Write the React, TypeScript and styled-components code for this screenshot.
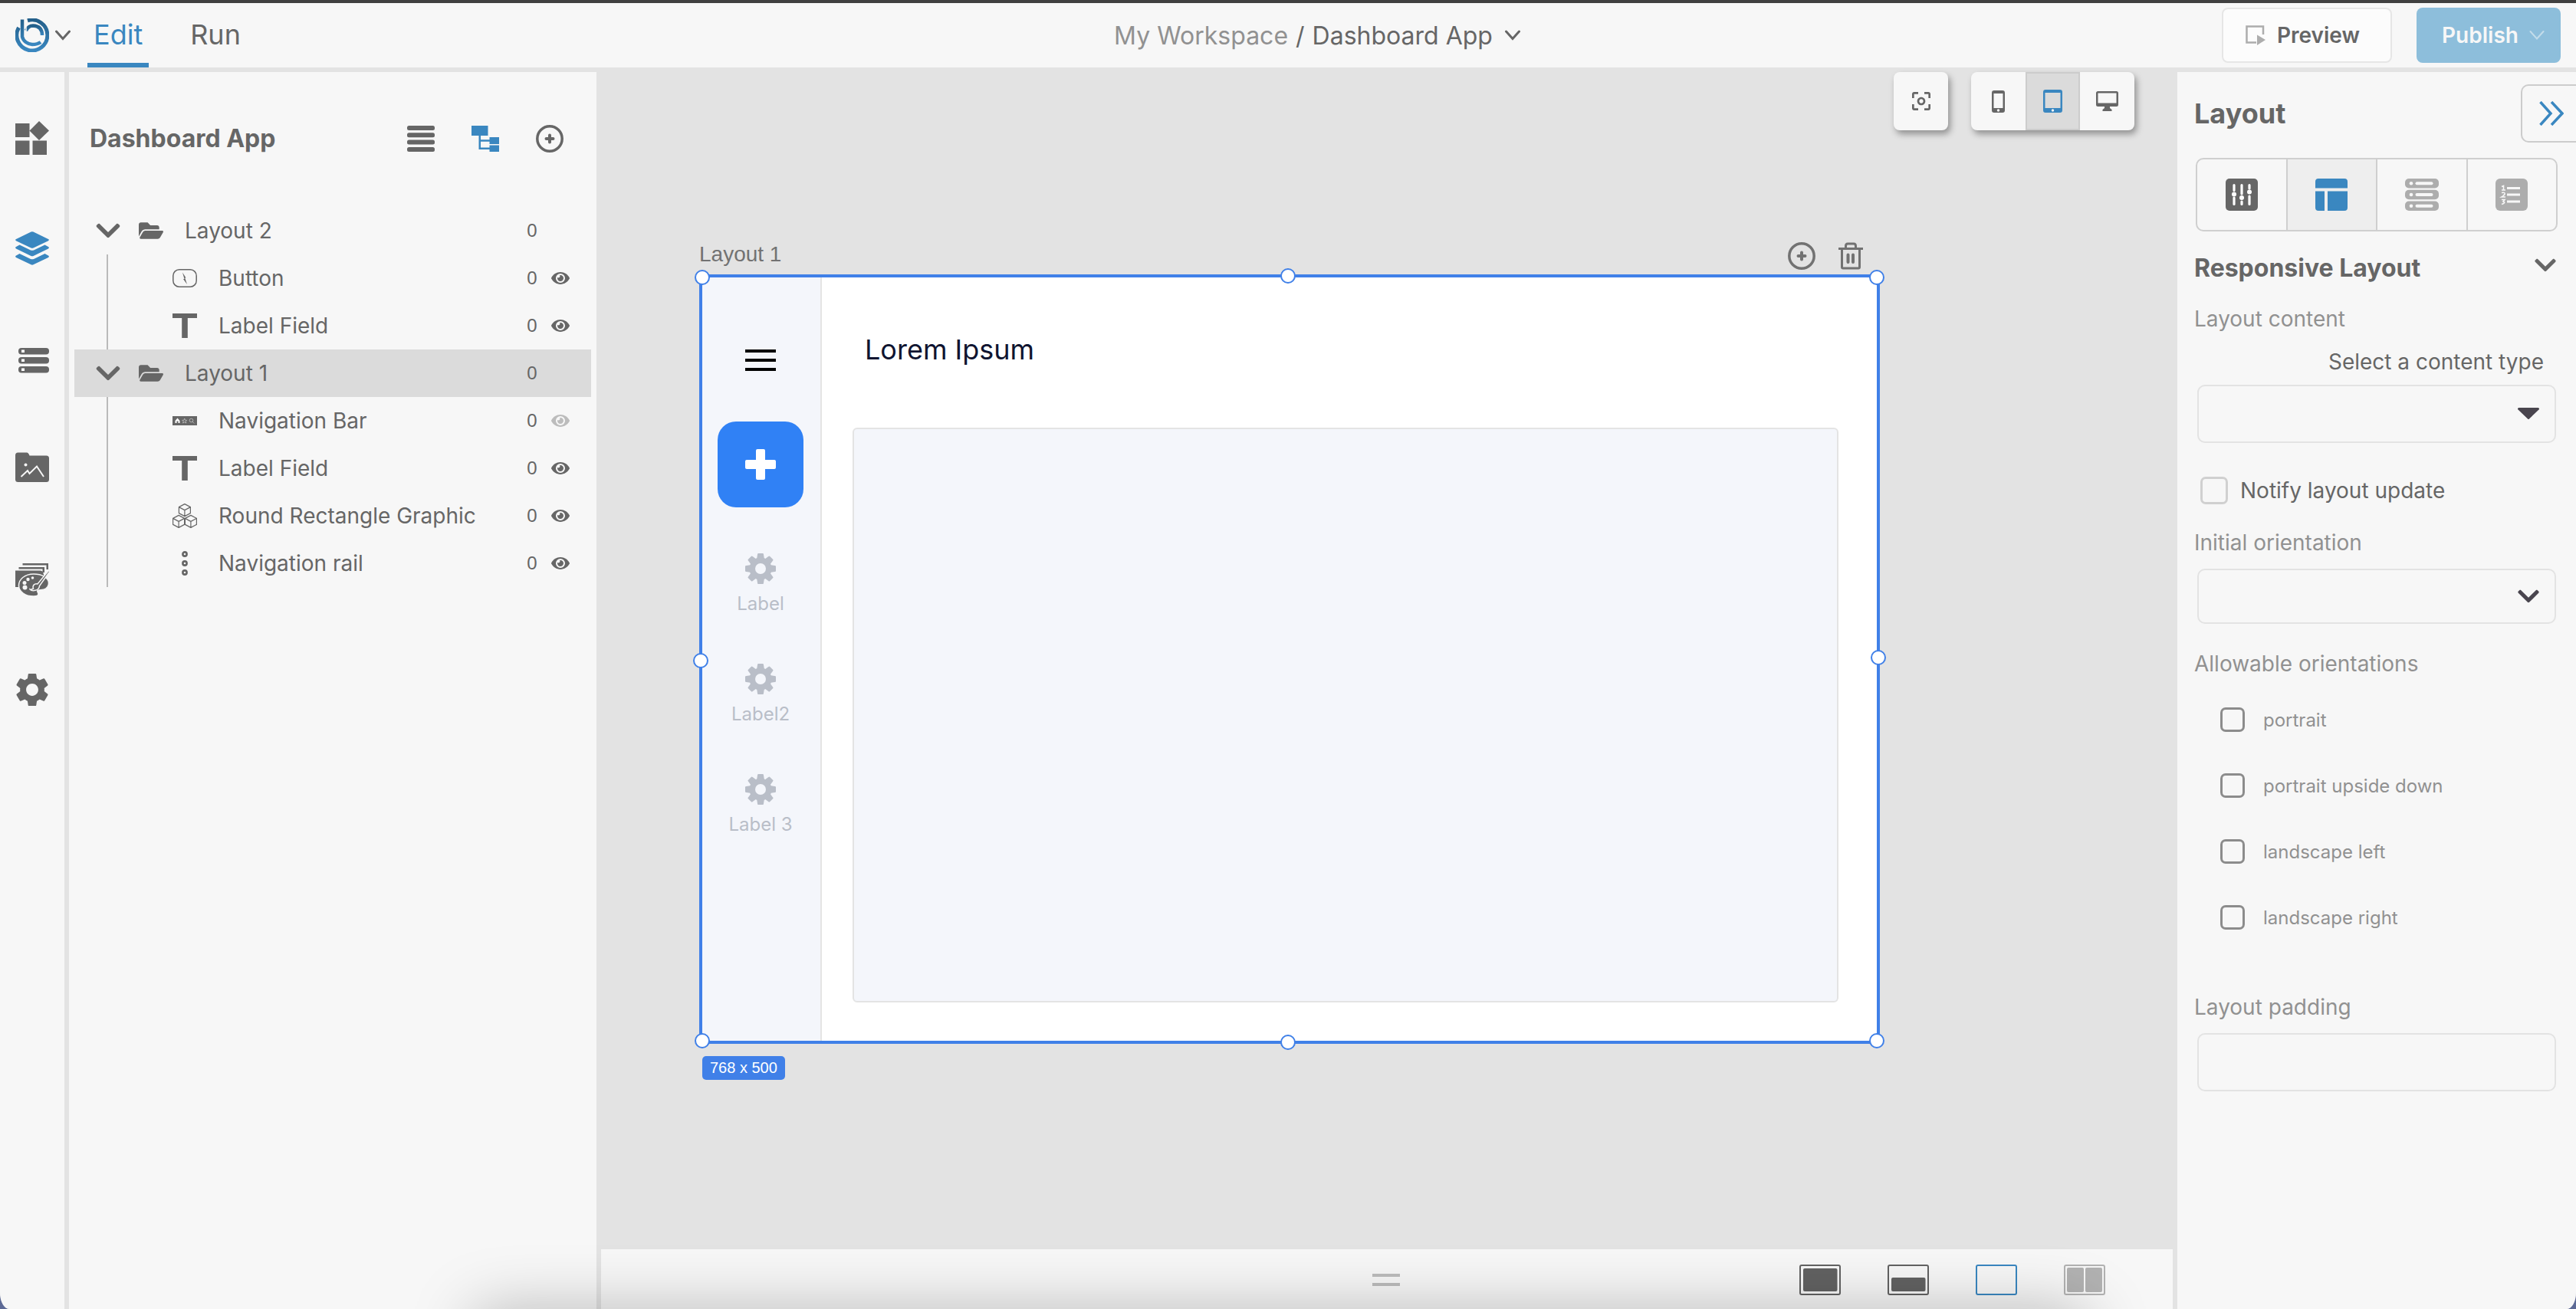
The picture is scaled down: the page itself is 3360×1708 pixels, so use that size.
import React from "react";
import styled, { createGlobalStyle, css } from "styled-components";
import { FaChevronDown, FaEye, FaFolderOpen } from "react-icons/fa";
import { MdCenterFocusWeak, MdSettings } from "react-icons/md";

const ink = "#666666";
const muted = "#919191";
const blue = "#3a87c0";
const selection = "#4080e8";
const surface = "#f7f7f7";
const gutter = "#e3e3e3";
const arial = `"Liberation Sans", Arial, sans-serif`;

const GlobalStyle = createGlobalStyle`
  * { box-sizing: border-box; }
  body { margin: 0; background: #5d6a96; }
  body, button, input, select {
    font-family: Inter, "Liberation Sans", Arial, sans-serif;
    color: ${ink};
  }
  button { padding: 0; border: 0; background: none; cursor: pointer; }
  h1, h2, h3, ul { margin: 0; padding: 0; list-style: none; }
  svg { display: block; flex: none; }
`;

/* ---------- page frame ---------- */

const Shell = styled.div`
  position: relative;
  display: flex;
  flex-direction: column;
  height: 100vh;
  overflow: hidden;
  background: ${gutter};
  border-top: 4px solid #404040;
  border-bottom-left-radius: 12px 22px;
  border-bottom-right-radius: 12px 22px;
`;

const DockShadow = styled.div`
  position: absolute;
  left: 620px;
  right: 640px;
  top: 100%;
  height: 80px;
  box-shadow: 0 4px 84px rgba(0, 0, 0, 0.28);
  pointer-events: none;
`;

const Header = styled.header`
  display: grid;
  grid-template-columns: 1fr auto 1fr;
  align-items: center;
  height: 84px;
  flex: none;
  padding: 0 20px;
  background: ${surface};
`;

const HeaderStart = styled.div`
  display: flex;
  align-items: center;
`;

const LogoButton = styled.button`
  display: flex;
  align-items: center;
  gap: 8px;
  margin-right: 22px;
`;

const ModeTabs = styled.nav`
  display: flex;
  gap: 46px;
`;

const ModeTab = styled.button<{ $active?: boolean }>`
  height: 84px;
  padding: 0 8px;
  font-size: 36px;
  border-top: 4px solid transparent;
  border-bottom: 6px solid ${(p) => (p.$active ? blue : "transparent")};
  color: ${(p) => (p.$active ? blue : ink)};
`;

const Breadcrumb = styled.div`
  display: flex;
  align-items: center;
  gap: 10px;
  padding-left: 76px;
  font-size: 32px;
`;

const WorkspaceLink = styled.a`
  color: ${muted};
  text-decoration: none;
`;

const AppSwitcher = styled.button`
  display: flex;
  align-items: center;
  gap: 16px;
  font-size: 32px;
`;

const HeaderEnd = styled.div`
  display: flex;
  justify-content: flex-end;
  gap: 32px;
`;

const ActionButton = styled.button<{ $primary?: boolean }>`
  display: flex;
  align-items: center;
  justify-content: center;
  gap: 14px;
  height: 72px;
  border-radius: 8px;
  font-size: 28px;
  font-weight: 600;
  ${(p) =>
    p.$primary
      ? css`
          width: 188px;
          padding-left: 12px;
          background: #8dbedb;
          color: #f7f7f7;
        `
      : css`
          width: 222px;
          padding-right: 12px;
          background: #fcfcfc;
          border: 2px solid #e6e6e6;
        `}
`;

const Workspace = styled.div`
  flex: 1;
  min-height: 0;
  display: grid;
  grid-template-columns: 84px 688px minmax(0, 1fr) 520px;
  gap: 6px;
  padding-top: 6px;
`;

/* ---------- icon rail ---------- */

const Rail = styled.nav`
  display: flex;
  flex-direction: column;
  align-items: center;
  gap: 100px;
  padding-top: 64px;
  background: ${surface};
`;

const RailButton = styled.button<{ $active?: boolean }>`
  width: 44px;
  height: 44px;
  color: ${(p) => (p.$active ? blue : ink)};
`;

/* ---------- layer tree ---------- */

const TreePanel = styled.aside`
  padding: 0 7px;
  background: ${surface};
`;

const TreeHeader = styled.div`
  display: flex;
  align-items: center;
  gap: 48px;
  height: 76px;
  margin: 49px 36px 51px 20px;
`;

const TreeTitle = styled.h1`
  flex: 1;
  font-size: 32px;
  line-height: 40px;
  font-weight: 700;
`;

const IconButton = styled.button<{ $color?: string }>`
  color: ${(p) => p.$color ?? ink};
`;

const Row = styled.div<{ $selected?: boolean }>`
  display: flex;
  align-items: center;
  height: 62px;
  font-size: 28px;
  padding-right: 28px;
  background: ${(p) => (p.$selected ? "#dbdbdb" : "transparent")};
`;

const GroupRow = styled(Row)`
  padding-left: 28px;
`;

const Children = styled.ul`
  margin-left: 42px;
  border-left: 2px solid #bababa;
`;

const ChildRow = styled(Row)`
  padding-left: 84px;
`;

const Disclosure = styled.button`
  margin-right: 24px;
  svg {
    width: 32px;
    height: 36px;
  }
`;

const RowIcon = styled.span`
  width: 32px;
  margin-right: 28px;
  svg {
    width: 32px;
    height: 32px;
  }
`;

const RowName = styled.span`
  flex: 1;
`;

const RowCount = styled.span`
  width: 16px;
  font-family: ${arial};
  font-size: 24px;
  text-align: center;
`;

const Visibility = styled.button<{ $dim?: boolean }>`
  width: 24px;
  height: 24px;
  margin-left: 17px;
  color: ${(p) => (p.$dim ? "#bcbcbc" : ink)};
  svg {
    width: 24px;
    height: 22px;
  }
`;

/* ---------- canvas ---------- */

const Stage = styled.main`
  display: flex;
  flex-direction: column;
  min-height: 0;
`;

const Canvas = styled.section`
  flex: 1;
  min-height: 0;
`;

const CanvasTools = styled.div`
  display: flex;
  justify-content: flex-end;
  gap: 30px;
  padding-right: 50px;
`;

const ToolGroup = styled.div`
  display: flex;
  height: 76px;
  border-radius: 8px;
  background: ${surface};
  box-shadow: 3px 5px 9px rgba(0, 0, 0, 0.36);
`;

const ToolButton = styled.button<{ $active?: boolean }>`
  display: grid;
  place-items: center;
  width: 71px;
  border: 2px solid ${(p) => (p.$active ? "#cccccc" : "transparent")};
  background: ${(p) => (p.$active ? "#dbdbdb" : "transparent")};
  color: ${(p) => (p.$active ? blue : ink)};
`;

const ArtboardWrap = styled.div`
  width: 1540px;
  margin: 140px 0 0 128px;
`;

const ArtboardBar = styled.div`
  display: flex;
  align-items: center;
  gap: 30px;
  height: 48px;
  padding-right: 22px;
  color: #727272;
`;

const ArtboardName = styled.h2`
  flex: 1;
  padding-bottom: 4px;
  font: 400 28px/40px ${arial};
`;

const Artboard = styled.div`
  position: relative;
  display: flex;
  height: 1004px;
  border: 4px solid ${selection};
  background: #ffffff;
`;

const Handle = styled.span<{ $x: string; $y: string }>`
  position: absolute;
  left: ${(p) => p.$x};
  top: ${(p) => p.$y};
  width: 20px;
  height: 20px;
  margin: -10px 0 0 -10px;
  border: 2px solid ${selection};
  border-radius: 50%;
  background: #ffffff;
`;

const SizeBadge = styled.div`
  display: inline-block;
  margin: 16px 4px;
  padding: 0 10px;
  border-radius: 5px;
  background: ${selection};
  color: #ffffff;
  font-family: ${arial};
  font-size: 20px;
  line-height: 31px;
`;

const NavRail = styled.div`
  display: flex;
  flex-direction: column;
  align-items: center;
  gap: 60px;
  width: 156px;
  padding: 88px 2px 0 0;
  border-right: 2px solid #e4e4e4;
  background: #f4f6fb;
`;

const AddButton = styled.button`
  display: grid;
  place-items: center;
  width: 112px;
  height: 112px;
  border-radius: 24px;
  background: #3081f5;
`;

const NavItem = styled.div`
  display: flex;
  flex-direction: column;
  align-items: center;
  gap: 8px;
  color: #b9bec8;
  font-size: 24px;
  line-height: 36px;
`;

const ArtboardBody = styled.div`
  flex: 1;
  display: flex;
  flex-direction: column;
  padding: 0 50px 50px 40px;
`;

const ArtboardTitle = styled.h3`
  height: 196px;
  padding: 70px 16px 0;
  font-size: 36px;
  line-height: 48px;
  font-weight: 400;
  color: #0f1430;
`;

const Placeholder = styled.div`
  flex: 1;
  border: 2px solid #e4e4e4;
  border-radius: 6px;
  background: #f4f6fb;
`;

/* ---------- bottom dock ---------- */

const Dock = styled.footer`
  display: flex;
  align-items: center;
  justify-content: flex-end;
  gap: 61px;
  height: 78px;
  padding: 2px 88px 0 0;
  background: ${surface};
`;

const Grip = styled.div`
  width: 36px;
  height: 16px;
  margin-right: 460px;
  border: solid #bcbcbc;
  border-width: 4px 0;
`;

const SplitButton = styled.button<{ $color: string }>`
  color: ${(p) => p.$color};
`;

/* ---------- inspector ---------- */

const Inspector = styled.aside`
  display: flex;
  flex-direction: column;
  padding: 16px 24px 16px 22px;
  background: ${surface};
`;

const InspectorHeader = styled.div`
  display: flex;
  align-items: center;
  justify-content: space-between;
  margin-right: -24px;
`;

const InspectorTitle = styled.h2`
  font-size: 36px;
  font-weight: 700;
`;

const CollapseButton = styled.button`
  display: flex;
  align-items: center;
  width: 72px;
  height: 76px;
  padding-left: 22px;
  border: 2px solid #cccccc;
  border-right: 0;
  border-radius: 10px 0 0 10px;
  color: ${blue};
`;

const Tabs = styled.div`
  display: flex;
  height: 96px;
  margin: 20px 0 28px 2px;
  border: 2px solid #cfcfcf;
  border-radius: 10px;
  overflow: hidden;
`;

const TabButton = styled.button<{ $active?: boolean; $dim?: boolean }>`
  flex: 1;
  display: grid;
  place-items: center;
  color: ${(p) => (p.$active ? blue : p.$dim ? "#adadad" : ink)};
  background: ${(p) => (p.$active ? "#eeeeee" : "transparent")};
  & + & {
    border-left: 2px solid #cfcfcf;
  }
`;

const SectionToggle = styled.button`
  display: flex;
  align-items: flex-start;
  justify-content: space-between;
  font-size: 32px;
  line-height: 40px;
  font-weight: 700;
  margin-bottom: 30px;
  padding-right: 2px;
  svg {
    width: 28px;
    height: 32px;
  }
`;

const FieldLabel = styled.label<{ $end?: boolean; $gap?: number }>`
  font-size: 28px;
  line-height: 32px;
  color: ${(p) => (p.$end ? ink : muted)};
  text-align: ${(p) => (p.$end ? "right" : "left")};
  padding-right: ${(p) => (p.$end ? 18 : 0)}px;
  margin-bottom: ${(p) => p.$gap ?? 18}px;
`;

const SelectBox = styled.div<{ $tall?: boolean }>`
  position: relative;
  height: ${(p) => (p.$tall ? 76 : 72)}px;
  margin: 0 2px 0 4px;
  color: #49454e;
  svg {
    position: absolute;
    right: 22px;
    top: 0;
    width: 28px;
    height: 100%;
    pointer-events: none;
  }
`;

const boxStyle = css`
  width: 100%;
  border: 2px solid #e3e3e3;
  border-radius: 10px;
  background: ${surface};
  font-size: 28px;
  padding: 0 20px;
`;

const Select = styled.select`
  ${boxStyle}
  appearance: none;
  height: 100%;
`;

const TextInput = styled.input`
  ${boxStyle}
  width: auto;
  height: 76px;
  margin: 0 2px 0 4px;
`;

const CheckLabel = styled.label`
  display: flex;
  align-items: center;
  gap: 16px;
  margin: 44px 8px 34px;
  font-size: 28px;
  line-height: 36px;
`;

const OptionLabel = styled.label`
  display: flex;
  align-items: center;
  gap: 24px;
  height: 86px;
  padding-left: 34px;
  font-size: 24px;
  color: ${muted};
`;

const Checkbox = styled.input<{ $light?: boolean }>`
  appearance: none;
  flex: none;
  width: ${(p) => (p.$light ? 36 : 32)}px;
  height: ${(p) => (p.$light ? 36 : 32)}px;
  margin: 0;
  border: 3px solid ${(p) => (p.$light ? "#d0d0d0" : "#8c8c8c")};
  border-radius: 7px;
`;

const Options = styled.div`
  display: flex;
  flex-direction: column;
  padding: 36px 0 58px;
`;

/* ---------- drawings ---------- */

const Logo = () => (
  <svg width="44" height="44" viewBox="0 0 44 44" fill="none">
    <defs>
      <linearGradient id="logo" x1="0" y1="0" x2="0" y2="1">
        <stop offset="0" stopColor="#235f8a" />
        <stop offset="1" stopColor="#3a87c0" />
      </linearGradient>
    </defs>
    <g stroke="url(#logo)">
      <path d="M16 2.8A20 20 0 1 1 4.500 12" strokeWidth="5" />
      <path d="M9 1.500V24A14 13 0 0 0 22 34Q29 34 33 31" strokeWidth="4.500" />
      <path d="M14 16Q17 9.500 23 9.500Q35 10 35 22" strokeWidth="4.500" />
    </g>
    <path d="M14 2V16" stroke="#f7f7f7" strokeWidth="1.500" />
  </svg>
);

const ThinChevron = ({ width = 20, color = ink, stroke = 3 }) => (
  <svg width={width} height="14" viewBox="0 0 20 14" fill="none">
    <path d="M1.500 2L10 11.500L18.500 2" stroke={color} strokeWidth={stroke} strokeLinecap="round" />
  </svg>
);

const PreviewIcon = () => (
  <svg width="28" height="28" viewBox="0 0 28 28">
    <path d="M15 23.500H2.500V2.500H24V13" fill="none" stroke="#adadad" strokeWidth="2.500" />
    <path d="M16 13.500L27 20L16 27Z" fill="#adadad" />
  </svg>
);

const WidgetsIcon = () => (
  <svg width="44" height="44" viewBox="0 0 44 44" fill="currentColor">
    <path d="M0 3H18.500V21H0ZM0 25.500H18.500V44H0ZM22.500 25.500H41V44H22.500ZM31 0L44 12.500L31 25L18.500 12.500Z" />
  </svg>
);

const LayersIcon = () => (
  <svg width="44" height="44" viewBox="0 0 44 44" fill="currentColor">
    <path d="M20.500 .6Q22 0 23.500 .6L43 10Q44.800 11 43 12.200L23.500 21.500Q22 22.200 20.500 21.500L1 12.200Q-.8 11 1 10Z" />
    <path d="M5.500 17.500L20 24.400Q22 25.200 24 24.400L38.500 17.500L43 20Q44.800 21.200 43 22.400L23.500 32Q22 32.700 20.500 32L1 22.400Q-.8 21.200 1 20Z" />
    <path d="M5.500 29L20 35.900Q22 36.700 24 35.900L38.500 29L43 31.500Q44.800 32.700 43 33.900L23.500 43.300Q22 44 20.500 43.300L1 33.900Q-.8 32.700 1 31.500Z" />
  </svg>
);

const DataIcon = () => (
  <svg width="44" height="44" viewBox="0 0 44 44">
    {[8, 20, 32].map((y) => (
      <g key={y}>
        <rect x="4" y={y} width="40" height="8.500" rx="4" fill="currentColor" />
        <rect x="8" y={y + 2.5} width="4" height="3.500" fill="#ffffff" />
      </g>
    ))}
  </svg>
);

const MediaIcon = () => (
  <svg width="44" height="44" viewBox="0 2 44 44">
    <path
      d="M3.500 2.500H15Q17 2.500 18.500 6.500H40.500Q44 6.500 44 10V37.500Q44 41 40.500 41H3.500Q0 41 0 37.500V6Q0 2.500 3.500 2.500Z"
      fill="currentColor"
    />
    <path d="M7.500 34L16 26L18.500 30L28 20.500L37 34" fill="none" stroke="#f7f7f7" strokeWidth="2" />
    <circle cx="13.500" cy="18.500" r="2" fill="#f7f7f7" />
  </svg>
);

const ThemeIcon = () => (
  <svg width="44" height="44" viewBox="0 0 44 44">
    <path d="M0 10.500H32Q36 10.500 36.500 14L38 20H12V30L4 32H0ZM4.500 6H38V13H35.500V8.500H4.500ZM9.500 1H43V9H40.500V3.500H9.500Z" fill="currentColor" />
    <path
      d="M24 15C12 15 4.500 22 4.500 30C4.500 38 13 44 24 44C28 44 30 43 30 41C30 39 28 38 29 36.500C31 34.500 43 38 43.500 27C43.500 20 35 15 24 15Z"
      fill="currentColor"
      stroke="#f7f7f7"
      strokeWidth="1.500"
    />
    <g fill="#f7f7f7">
      <circle cx="22.500" cy="20" r="1.800" />
      <circle cx="16.500" cy="22" r="2.200" />
      <circle cx="12" cy="26.500" r="2.500" />
      <circle cx="12.500" cy="32.500" r="3" />
    </g>
    <path d="M43 11L29 28C25 27 22 30 23.500 34C19 36 19 35 19 35C22 38 31 37 31.500 30.500L44 13" fill="currentColor" stroke="#f7f7f7" strokeWidth="1.500" />
  </svg>
);

const ListIcon = () => (
  <svg width="36" height="36" viewBox="0 0 36 36" fill="currentColor">
    {[1, 10.2, 19.6, 29].map((y) => (
      <rect key={y} y={y} width="36" height="6" rx="2.500" />
    ))}
  </svg>
);

const TreeIcon = () => (
  <svg width="36" height="36" viewBox="0 0 36 36" fill="currentColor">
    <path d="M0 1H21.500V14H12V19.200H23.500V16H36V25H23.500V21.700H12V29.500H23.500V26.500H36V35H23.500V32H9.500V14H0Z" />
  </svg>
);

const PlusCircleIcon = () => (
  <svg width="36" height="36" viewBox="0 0 36 36" fill="none" stroke="currentColor">
    <circle cx="18" cy="18" r="16.200" strokeWidth="3.500" />
    <path d="M13.500 18H22.500M18 13.500V22.500" strokeWidth="4" strokeLinecap="round" />
  </svg>
);

const TrashIcon = () => (
  <svg width="32" height="36" viewBox="0 0 32 36" fill="none" stroke="currentColor" strokeWidth="3">
    <path d="M0 8.500H32M4.500 8.500V32.500Q4.500 34 6 34H26Q27.500 34 27.500 32.500V8.500M9.500 8V5Q9.500 2 12 2H20Q22.500 2 22.500 5V8" />
    <path d="M12.500 16.500V26M19 16.500V26" strokeWidth="4" strokeLinecap="round" />
  </svg>
);

const ButtonGlyph = () => (
  <svg viewBox="0 0 32 32">
    <rect x=".8" y="4.800" width="30.400" height="22.400" rx="8" fill="none" stroke="currentColor" strokeWidth="1.500" />
    <path d="M13 8.500L17.500 15.500H16.200L19 24L14 17H15.500Z" fill="currentColor" />
  </svg>
);

const TextGlyph = () => (
  <svg viewBox="0 0 32 32" fill="currentColor">
    <path d="M0 0H32V6H19.800V32H12.200V6H0Z" />
  </svg>
);

const BarGlyph = () => (
  <svg viewBox="0 0 32 32">
    <path d="M0 10H32V22H0Z" fill="currentColor" />
    <path d="M3.500 16L6.500 12.500L9.500 16V19H7.500V16.500H5.500V19H3.500Z" fill="#fff" />
    <g fill="none" stroke="#c4c4c4" strokeWidth=".8">
      <path d="M15.700 13L16.600 15.300H18.700L17.200 16.800L17.800 19L15.700 17.700L13.600 19L14.200 16.800L12.700 15.300H14.800Z" />
      <circle cx="24.500" cy="15.500" r="2.300" />
      <path d="M26 17.200L28.300 19.500" />
    </g>
  </svg>
);

const CubesGlyph = () => (
  <svg viewBox="0 0 32 32" fill="none" stroke="currentColor" strokeWidth="1.200" strokeLinejoin="round">
    {["8.400 .6", ".6 15.400", "16.400 15.400"].map((at) => (
      <path
        key={at}
        transform={`translate(${at})`}
        d="M7.500 0L15 4V12L7.500 16L0 12V4ZM0 4L7.500 8L15 4M7.500 8V16"
      />
    ))}
  </svg>
);

const RailGlyph = () => (
  <svg viewBox="0 0 32 32" fill="none" stroke="currentColor" strokeWidth="2.600">
    <circle cx="16" cy="4" r="2.600" />
    <circle cx="16" cy="16" r="2.600" />
    <circle cx="16" cy="28" r="2.600" />
  </svg>
);

const PhoneIcon = ({ width = 17, height = 29 }) => (
  <svg width={width} height={height} viewBox={`0 0 ${width} ${height}`}>
    <path
      fillRule="evenodd"
      fill="currentColor"
      d={`M3 0H${width - 3}Q${width} 0 ${width} 3V${height - 3}Q${width} ${height} ${width - 3} ${height}H3Q0 ${height} 0 ${height - 3}V3Q0 0 3 0ZM2.500 4V${height - 6}H${width - 2.5}V4Z`}
    />
    <circle cx={width / 2} cy={height - 3} r="1.700" fill="#f7f7f7" />
  </svg>
);

const DesktopIcon = () => (
  <svg width="29" height="26" viewBox="0 0 29 26" fill="currentColor">
    <path
      fillRule="evenodd"
      d="M2.500 0H26.500Q29 0 29 2.500V17.500Q29 20 26.500 20H18V22L20.500 24V26H8.500V24L11 22V20H2.500Q0 20 0 17.500V2.500Q0 0 2.500 0ZM2.500 2.500V15.500H26.500V2.500Z"
    />
  </svg>
);

const HamburgerIcon = () => (
  <svg width="40" height="40" viewBox="0 0 40 40" fill="#000">
    <path d="M0 6H40V10H0ZM0 18H40V22H0ZM0 30H40V34H0Z" />
  </svg>
);

const PlusIcon = () => (
  <svg width="40" height="40" viewBox="0 0 40 40" fill="#fff">
    <rect x="14" width="12" height="40" rx="2" />
    <rect y="14" width="40" height="12" rx="2" />
  </svg>
);

const CogIcon = () => (
  <svg width="40" height="40" viewBox="0 0 40 40" fill="currentColor">
    <circle cx="20" cy="20" r="14.500" />
    {[0, 45, 90, 135].map((a) => (
      <path key={a} transform={`rotate(${a} 20 20)`} d="M17 0H23Q24 0 24 1.500L25 8V32L24 38.500Q24 40 23 40H17Q16 40 16 38.500L15 32V8L16 1.500Q16 0 17 0Z" />
    ))}
    <circle cx="20" cy="20" r="7" fill="#f4f6fb" />
  </svg>
);

const DoubleChevron = () => (
  <svg width="32" height="32" viewBox="0 0 32 32" fill="none" stroke="currentColor" strokeWidth="3.500">
    <path d="M1.500 1L15 16L1.500 31M16 1L30 16L16 31" />
  </svg>
);

const SlidersTab = () => (
  <svg width="42" height="42" viewBox="0 0 42 42">
    <rect width="42" height="42" rx="5" fill="currentColor" />
    <g stroke="#fff" strokeWidth="3.200" strokeLinecap="round">
      <path d="M11 8.500V15.500M11 25V33.500M21 8.500V20M21 30V33.500M31 8.500V13M31 23V33.500" />
    </g>
    <g fill="#fff">
      <circle cx="11" cy="20.500" r="3" />
      <circle cx="21" cy="25" r="3" />
      <circle cx="31" cy="17.500" r="3" />
    </g>
  </svg>
);

const LayoutTab = () => (
  <svg width="42" height="42" viewBox="0 0 42 42" fill="currentColor">
    <path d="M4 0H38Q42 0 42 4V12.500H0V4Q0 0 4 0ZM0 16.500H12V42H4Q0 42 0 38ZM16 16.500H42V38Q42 42 38 42H16Z" />
  </svg>
);

const RowsTab = () => (
  <svg width="44" height="42" viewBox="0 0 44 42">
    {[0, 14.8, 29.5].map((y) => (
      <g key={y}>
        <rect y={y} width="44" height="12.500" rx="5" fill="currentColor" />
        <circle cx="8" cy={y + 6.2} r="2.300" fill="#f7f7f7" />
        <rect x="13.500" y={y + 4.2} width="23" height="4" rx="2" fill="#f7f7f7" />
      </g>
    ))}
  </svg>
);

const NumbersTab = () => (
  <svg width="42" height="42" viewBox="0 0 42 42">
    <rect width="42" height="42" rx="6" fill="currentColor" />
    <g fill="none" stroke="#f7f7f7" strokeWidth="1.600">
      <path d="M8 10.500L10.500 9.500V15M8 15H13M8 18.500Q12.500 17.500 12 20Q11.500 22 8 24H13M8 27.500H12L10 30Q14 31.500 8 33.500" />
    </g>
    <path d="M15 12.500H32M15 21H32M15 30H32" stroke="#f7f7f7" strokeWidth="3" />
  </svg>
);

const Caret = () => (
  <svg viewBox="0 0 28 16" fill="currentColor">
    <path d="M1.500 0H26.500Q29 .8 27.500 2.500L15 14.500Q14 15.500 13 14.500L.5 2.500Q-1 .8 1.500 0Z" />
  </svg>
);

const SplitIcon = ({ kind }: { kind: string }) => (
  <svg width="54" height="40" viewBox="0 0 54 40">
    <rect x="1" y="1" width="52" height="38" rx="2" fill={kind === "empty" ? "none" : "#f7f7f7"} stroke="currentColor" strokeWidth="2" />
    <g fill="currentColor">
      {kind === "full" && <rect x="5" y="5" width="44.500" height="30" rx="2" />}
      {kind === "half" && <rect x="5" y="17" width="44.500" height="18" rx="2" />}
      {kind === "columns" && <rect x="4" y="4" width="22" height="32" rx="2" />}
      {kind === "columns" && <rect x="28" y="4" width="22" height="32" rx="2" />}
    </g>
  </svg>
);

/* ---------- data ---------- */

type TreeItem = { name: string; icon: React.ReactNode; hidden?: boolean };
type TreeGroup = { name: string; selected?: boolean; items: TreeItem[] };

const tree: TreeGroup[] = [
  {
    name: "Layout 2",
    items: [
      { name: "Button", icon: <ButtonGlyph /> },
      { name: "Label Field", icon: <TextGlyph /> },
    ],
  },
  {
    name: "Layout 1",
    selected: true,
    items: [
      { name: "Navigation Bar", icon: <BarGlyph />, hidden: true },
      { name: "Label Field", icon: <TextGlyph /> },
      { name: "Round Rectangle Graphic", icon: <CubesGlyph /> },
      { name: "Navigation rail", icon: <RailGlyph /> },
    ],
  },
];

const handles = [
  ["0", "0"],
  ["calc(50% - 2px)", "-2px"],
  ["100%", "0"],
  ["-2px", "calc(50% + 2px)"],
  ["calc(100% + 2px)", "calc(50% - 2px)"],
  ["0", "100%"],
  ["calc(50% - 2px)", "calc(100% + 2px)"],
  ["100%", "100%"],
];

const orientations = ["portrait", "portrait upside down", "landscape left", "landscape right"];

export default function App() {
  return (
    <>
      <GlobalStyle />
      <Shell>
        <Header>
          <HeaderStart>
            <LogoButton aria-label="Main menu">
              <Logo />
              <ThinChevron />
            </LogoButton>
            <ModeTabs>
              <ModeTab $active>Edit</ModeTab>
              <ModeTab>Run</ModeTab>
            </ModeTabs>
          </HeaderStart>
          <Breadcrumb>
            <WorkspaceLink href="#workspace">My Workspace</WorkspaceLink>
            <span>/</span>
            <AppSwitcher>
              Dashboard App
              <ThinChevron />
            </AppSwitcher>
          </Breadcrumb>
          <HeaderEnd>
            <ActionButton>
              <PreviewIcon />
              Preview
            </ActionButton>
            <ActionButton $primary>
              Publish
              <ThinChevron color="#c3dcea" stroke={2} />
            </ActionButton>
          </HeaderEnd>
        </Header>

        <Workspace>
          <Rail>
            <RailButton aria-label="Components"><WidgetsIcon /></RailButton>
            <RailButton aria-label="Layers" $active><LayersIcon /></RailButton>
            <RailButton aria-label="Data"><DataIcon /></RailButton>
            <RailButton aria-label="Media"><MediaIcon /></RailButton>
            <RailButton aria-label="Themes"><ThemeIcon /></RailButton>
            <RailButton aria-label="Settings"><MdSettings viewBox="2 2 20 20" size={44} /></RailButton>
          </Rail>

          <TreePanel>
            <TreeHeader>
              <TreeTitle>Dashboard App</TreeTitle>
              <IconButton aria-label="List view"><ListIcon /></IconButton>
              <IconButton aria-label="Tree view" $color={blue}><TreeIcon /></IconButton>
              <IconButton aria-label="Add layout"><PlusCircleIcon /></IconButton>
            </TreeHeader>
            {tree.map((group) => (
              <div key={group.name}>
                <GroupRow $selected={group.selected}>
                  <Disclosure aria-label={`Toggle ${group.name}`}><FaChevronDown /></Disclosure>
                  <RowIcon><FaFolderOpen /></RowIcon>
                  <RowName>{group.name}</RowName>
                  <RowCount>0</RowCount>
                  <Visibility as="span" />
                </GroupRow>
                <Children>
                  {group.items.map((item) => (
                    <li key={item.name}>
                      <ChildRow>
                        <RowIcon>{item.icon}</RowIcon>
                        <RowName>{item.name}</RowName>
                        <RowCount>0</RowCount>
                        <Visibility aria-label={`Show ${item.name}`} $dim={item.hidden}><FaEye /></Visibility>
                      </ChildRow>
                    </li>
                  ))}
                </Children>
              </div>
            ))}
          </TreePanel>

          <Stage>
            <Canvas>
              <CanvasTools>
                <ToolGroup>
                  <ToolButton aria-label="Center view"><MdCenterFocusWeak viewBox="3 3 18 18" size={24} /></ToolButton>
                </ToolGroup>
                <ToolGroup>
                  <ToolButton aria-label="Phone"><PhoneIcon /></ToolButton>
                  <ToolButton aria-label="Tablet" $active><PhoneIcon width={25} height={30} /></ToolButton>
                  <ToolButton aria-label="Desktop"><DesktopIcon /></ToolButton>
                </ToolGroup>
              </CanvasTools>
              <ArtboardWrap>
                <ArtboardBar>
                  <ArtboardName>Layout 1</ArtboardName>
                  <IconButton aria-label="Add" $color="#727272"><PlusCircleIcon /></IconButton>
                  <IconButton aria-label="Delete" $color="#727272"><TrashIcon /></IconButton>
                </ArtboardBar>
                <Artboard>
                  <NavRail>
                    <HamburgerIcon />
                    <AddButton aria-label="New"><PlusIcon /></AddButton>
                    {["Label", "Label2", "Label 3"].map((label) => (
                      <NavItem key={label}>
                        <CogIcon />
                        {label}
                      </NavItem>
                    ))}
                  </NavRail>
                  <ArtboardBody>
                    <ArtboardTitle>Lorem Ipsum</ArtboardTitle>
                    <Placeholder />
                  </ArtboardBody>
                  {handles.map(([x, y]) => (
                    <Handle key={x + y} $x={x} $y={y} />
                  ))}
                </Artboard>
                <SizeBadge>768 x 500</SizeBadge>
              </ArtboardWrap>
            </Canvas>
            <Dock>
              <Grip />
              <SplitButton aria-label="Full" $color="#626262"><SplitIcon kind="full" /></SplitButton>
              <SplitButton aria-label="Half" $color="#626262"><SplitIcon kind="half" /></SplitButton>
              <SplitButton aria-label="Canvas only" $color={blue}><SplitIcon kind="empty" /></SplitButton>
              <SplitButton aria-label="Columns" $color="#b2b2b2"><SplitIcon kind="columns" /></SplitButton>
            </Dock>
          </Stage>

          <Inspector>
            <InspectorHeader>
              <InspectorTitle>Layout</InspectorTitle>
              <CollapseButton aria-label="Collapse panel"><DoubleChevron /></CollapseButton>
            </InspectorHeader>
            <Tabs>
              <TabButton aria-label="Properties"><SlidersTab /></TabButton>
              <TabButton aria-label="Layout" $active><LayoutTab /></TabButton>
              <TabButton aria-label="Data" $dim><RowsTab /></TabButton>
              <TabButton aria-label="Order" $dim><NumbersTab /></TabButton>
            </Tabs>
            <SectionToggle>
              Responsive Layout
              <FaChevronDown />
            </SectionToggle>
            <FieldLabel as="div" $gap={24}>Layout content</FieldLabel>
            <FieldLabel htmlFor="content-type" $end $gap={14}>Select a content type</FieldLabel>
            <SelectBox $tall>
              <Select id="content-type" />
              <Caret />
            </SelectBox>
            <CheckLabel>
              <Checkbox type="checkbox" $light />
              Notify layout update
            </CheckLabel>
            <FieldLabel htmlFor="initial">Initial orientation</FieldLabel>
            <SelectBox>
              <Select id="initial" />
              <FaChevronDown />
            </SelectBox>
            <Options role="group" aria-labelledby="allowable">
              <FieldLabel as="div" id="allowable" $gap={14}>Allowable orientations</FieldLabel>
              {orientations.map((name) => (
                <OptionLabel key={name}>
                  <Checkbox type="checkbox" />
                  {name}
                </OptionLabel>
              ))}
            </Options>
            <FieldLabel htmlFor="padding">Layout padding</FieldLabel>
            <TextInput id="padding" />
          </Inspector>
        </Workspace>
        <DockShadow />
      </Shell>
    </>
  );
}
